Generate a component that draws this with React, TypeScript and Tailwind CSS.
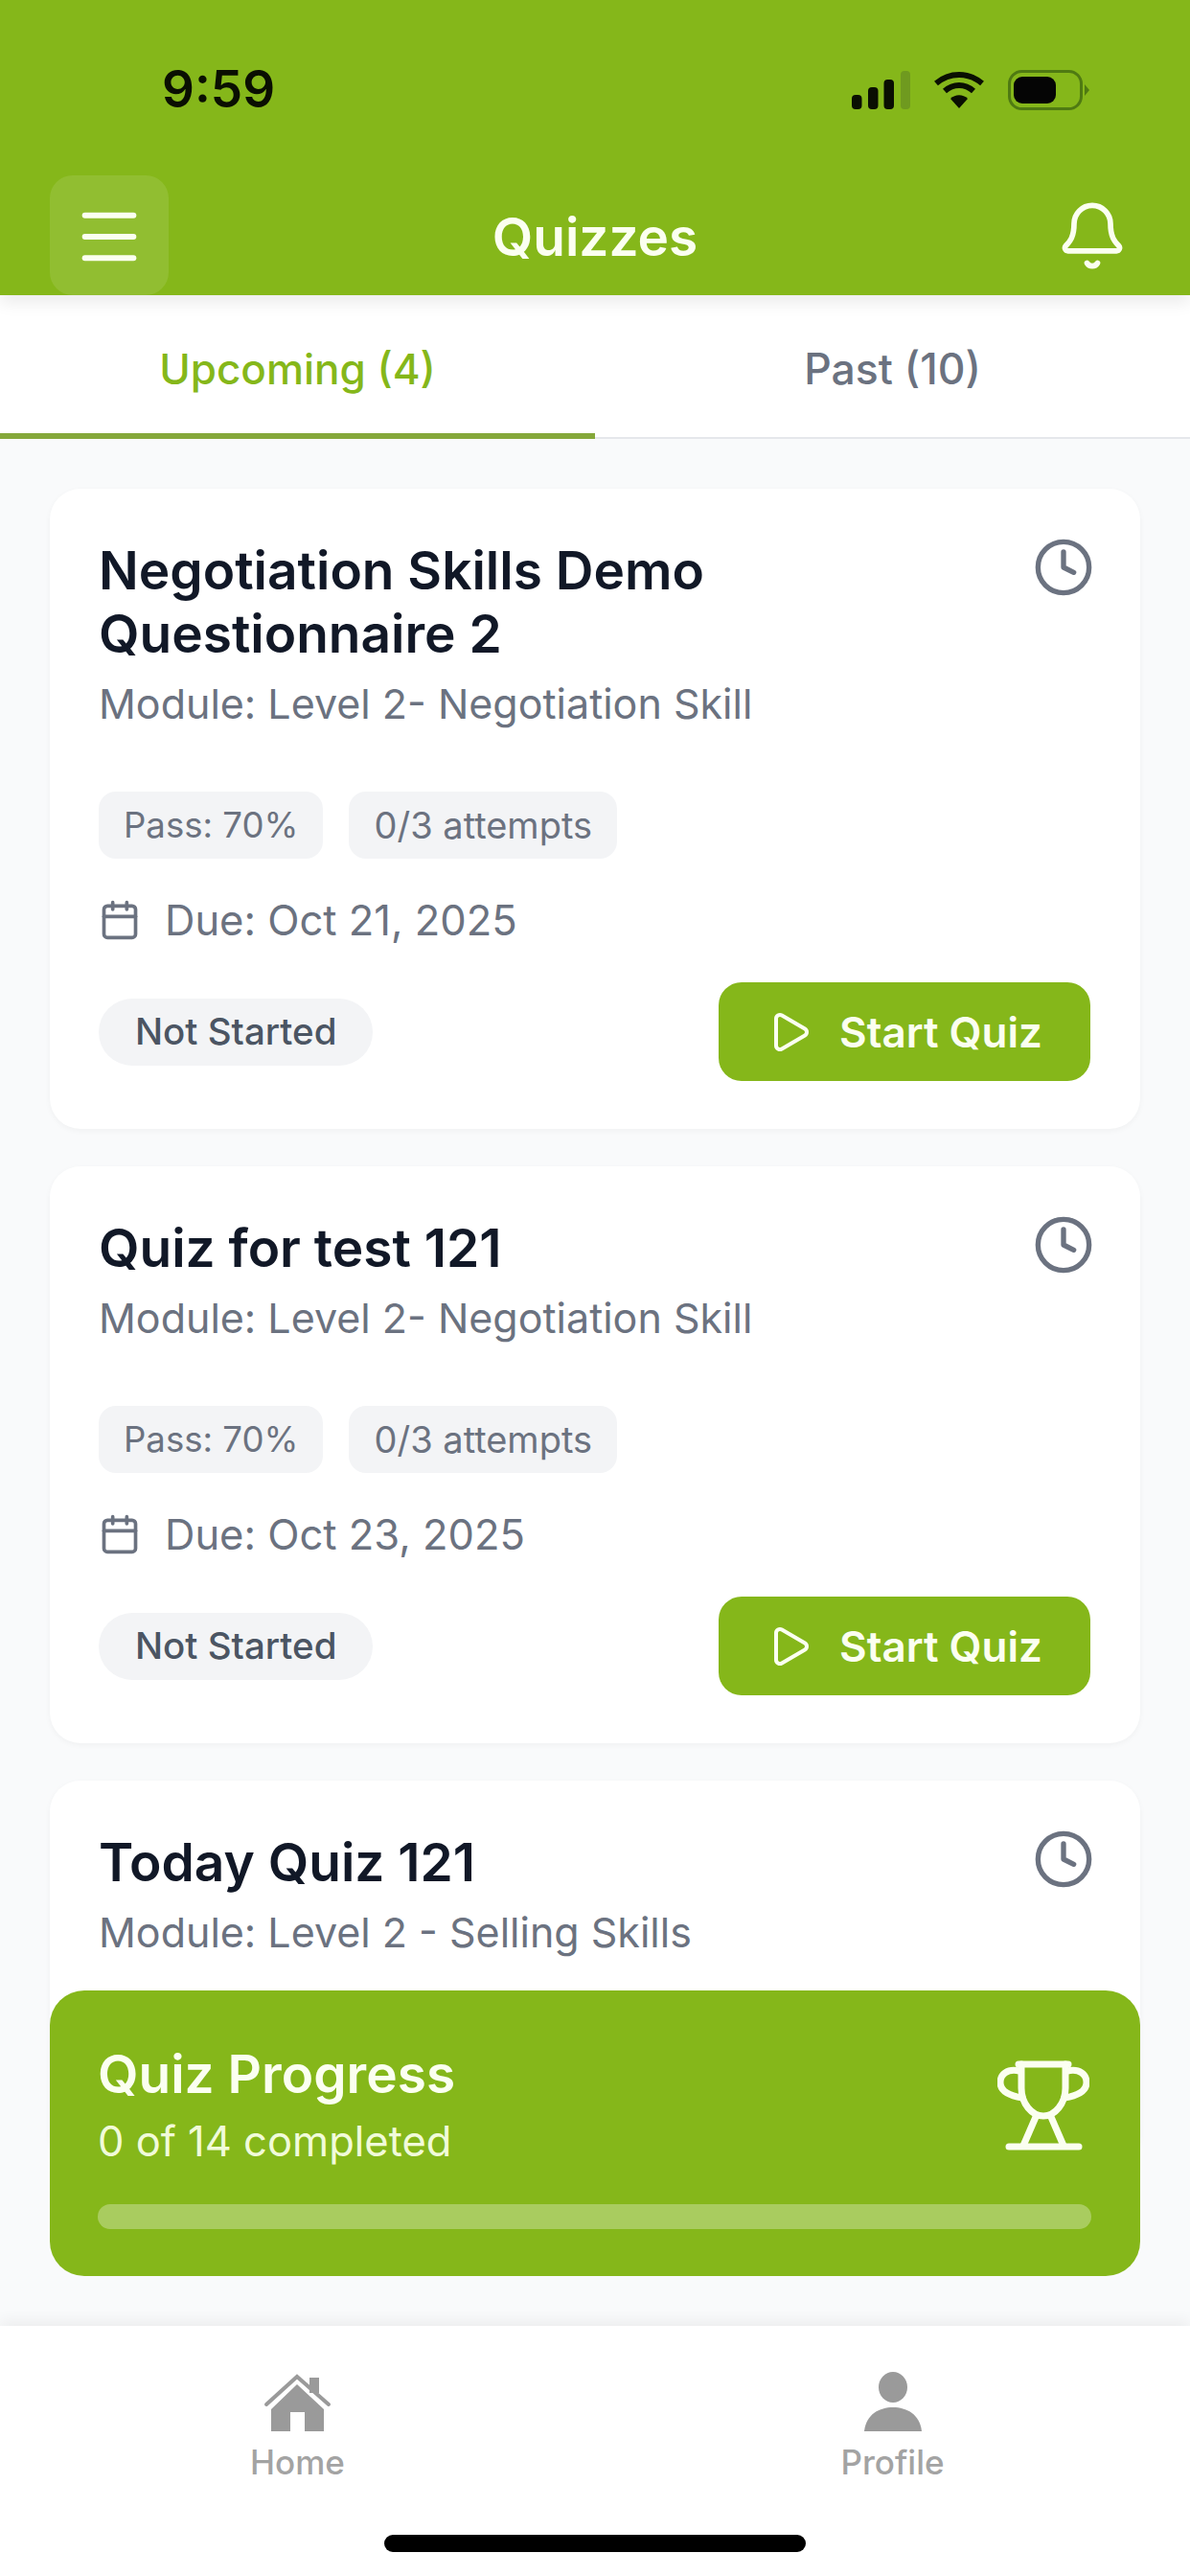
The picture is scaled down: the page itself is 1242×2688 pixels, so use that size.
import { Bell, Calendar, Clock, Menu, Play } from "lucide-react";

type Quiz = {
  title: string[];
  module: string;
  due?: string;
};

const quizzes: Quiz[] = [
  { title: ["Negotiation Skills Demo", "Questionnaire 2"], module: "Module: Level 2- Negotiation Skill", due: "Due: Oct 21, 2025" },
  { title: ["Quiz for test 121"], module: "Module: Level 2- Negotiation Skill", due: "Due: Oct 23, 2025" },
  { title: ["Today Quiz 121"], module: "Module: Level 2 - Selling Skills" },
];

const StatusIcons = () => (
  <div className="flex items-center gap-[25px] mt-[6px]">
    <svg width="61" height="40" viewBox="0 0 61 40">
      <rect x="0" y="25" width="10.5" height="15" rx="4" fill="#0a0f02" />
      <rect x="17" y="17" width="10.5" height="23" rx="4" fill="#0a0f02" />
      <rect x="33.5" y="9" width="10.5" height="31" rx="4" fill="#0a0f02" />
      <rect x="51" y="0" width="10" height="40" rx="4" fill="#6f9a1f" />
    </svg>
    <svg width="52" height="40" viewBox="0 0 52 40">
      <path d="M2 13 C16 1 36 1 50 13" fill="none" stroke="#0a0f02" strokeWidth="6" />
      <path d="M11 21 C20 13 32 13 41 21" fill="none" stroke="#0a0f02" strokeWidth="6" />
      <path d="M17 29 C22 24 30 24 35 29 L26 39 Z" fill="#0a0f02" />
    </svg>
    <svg width="86" height="42" viewBox="0 0 86 42">
      <rect x="1.5" y="1.5" width="75" height="39" rx="13" fill="none" stroke="#4f7a12" strokeWidth="3" />
      <rect x="6" y="7" width="44" height="28" rx="9" fill="#050505" />
      <path d="M80 15 L85 21 L80 27 Z" fill="#4f7a12" />
    </svg>
  </div>
);

const Header = () => (
  <div className="bg-[#85b71a] h-[308px] flex flex-col shrink-0 relative z-10 shadow-[0_8px_16px_rgba(0,0,0,0.08)]">
    <div className="h-[183px] pl-[169px] pr-[104px] pt-[67px] flex justify-between items-start">
      <span className="text-[53px] leading-[52px] font-semibold text-[#0a0f02]">9:59</span>
      <StatusIcons />
    </div>
    <div className="flex-1 flex items-center px-[52px]">
      <div className="flex-1">
        <div className="w-[124px] h-[125px] rounded-[24px] bg-white/10 flex items-center justify-center">
          <Menu size={76} color="#fbfff0" strokeWidth={1.9} className="mt-[2px]" />
        </div>
      </div>
      <span className="text-[55px] font-semibold text-[#fbfff0] mb-[-4px]">Quizzes</span>
      <div className="flex-1 flex justify-end">
        <Bell size={76} color="#fbfff0" strokeWidth={1.8} className="mr-[12px]" />
      </div>
    </div>
  </div>
);

const Tabs = () => (
  <div className="h-[150px] bg-white flex shrink-0 border-b-2 border-[#e5e7eb]">
    <div className="flex-1 flex items-center justify-center text-[44px] font-medium text-[#85b71a] border-b-[6px] border-[#85a83a] mb-[-2px] pt-[10px]">
      Upcoming (4)
    </div>
    <div className="flex-1 flex items-center justify-center text-[44.5px] font-medium text-[#6b7280] pt-[6px]">
      Past (10)
    </div>
  </div>
);

const QuizCard = ({ quiz }: { quiz: Quiz }) => (
  <div className={`bg-white rounded-[32px] pl-[51px] pr-[52px] pt-[52px] pb-[50px] shadow-[0_2px_6px_rgba(0,0,0,0.04)] shrink-0 ${quiz.due ? "" : "min-h-[400px]"}`}>
    <div className="flex justify-between items-start">
      <div className="text-[55px] leading-[66px] font-semibold text-[#111827]">
        {quiz.title.map((line) => (
          <div key={line}>{line}</div>
        ))}
      </div>
      <Clock size={64} color="#6b7280" strokeWidth={2} className="mr-[-4px] mt-[-2px]" />
    </div>
    <div className="text-[43px] leading-[58px] text-[#6b7280] mt-[11px]">{quiz.module}</div>
    {quiz.due && (
      <>
        <div className="flex gap-[27px] mt-[63px]">
          <span className="h-[70px] px-[26px] rounded-[18px] bg-[#f3f4f6] flex items-center text-[36.6px] text-[#6b7280]">Pass: 70%</span>
          <span className="h-[70px] px-[26px] rounded-[18px] bg-[#f3f4f6] flex items-center text-[38px] text-[#6b7280]">0/3 attempts</span>
        </div>
        <div className="flex items-center gap-[25px] mt-[38px] text-[43.5px] leading-[52px] text-[#6b7280]">
          <Calendar size={44} strokeWidth={2} />
          <span>{quiz.due}</span>
        </div>
        <div className="flex justify-between items-center mt-[39px]">
          <span className="h-[70px] px-[38px] rounded-full bg-[#f3f4f6] flex items-center text-[38.5px] font-medium text-[#4b5563]">Not Started</span>
          <button className="h-[103px] w-[388px] rounded-[24px] bg-[#85b71a] flex items-center justify-center gap-[28px] text-[44px] font-semibold text-[#fbfff0]">
            <Play size={48} strokeWidth={2} />
            <span>Start Quiz</span>
          </button>
        </div>
      </>
    )}
  </div>
);

const TrophyIcon = () => (
  <svg width="96" height="96" viewBox="0 0 96 96" fill="none" stroke="#fbfff0" strokeWidth="7" strokeLinecap="round" strokeLinejoin="round" className="mr-[2px] mt-[17px]">
    <path d="M22 5 H74" />
    <path d="M25 5 V30 C25 46 36 59 48 59 C60 59 71 46 71 30 V5" />
    <path d="M40 60 L27 90" />
    <path d="M56 60 L69 90" />
    <path d="M12 91 H85" />
    <path d="M23 12 C10 9 3 16 3 24 C3 33 13 38 26 40" />
    <path d="M73 12 C86 9 93 16 93 24 C93 33 83 38 70 40" />
  </svg>
);

const ProgressPanel = () => (
  <div className="absolute left-[52px] right-[52px] bottom-[52px] h-[298px] rounded-[36px] bg-[#85b71a] pl-[50px] pr-[51px] pt-[55px]">
    <div className="flex justify-between items-start">
      <div>
        <div className="text-[55px] leading-[64px] font-semibold text-[#fbfff0]">Quiz Progress</div>
        <div className="text-[43.5px] leading-[56px] text-[#f1fbd9] mt-[10px]">0 of 14 completed</div>
      </div>
      <TrophyIcon />
    </div>
    <div className="h-[26px] rounded-full bg-white/30 mt-[38px]" />
  </div>
);

const BottomNav = () => (
  <div className="h-[261px] bg-white shrink-0 relative shadow-[0_-6px_14px_rgba(0,0,0,0.05)]">
    <div className="flex pt-[48px]">
      <div className="flex-1 flex flex-col items-center">
        <svg width="72" height="62" viewBox="0 0 72 62">
          <path d="M3 34 L35 5 L68 34" fill="none" stroke="#9a9a9a" strokeWidth="4" strokeLinecap="round" />
          <rect x="48" y="6" width="10" height="16" fill="#9a9a9a" />
          <path d="M8 39 L35 13 L63 39 L63 62 L43 62 L43 42 L28 42 L28 62 L8 62 Z" fill="#9a9a9a" />
        </svg>
        <span className="text-[35px] leading-[44px] font-medium text-[#a3a3a3] mt-[10px]">Home</span>
      </div>
      <div className="flex-1 flex flex-col items-center">
        <svg width="62" height="62" viewBox="0 0 62 62">
          <ellipse cx="31" cy="16" rx="15" ry="16" fill="#9a9a9a" />
          <path d="M1 62 C3 44 17 37 31 37 C45 37 59 44 61 62 Z" fill="#9a9a9a" />
        </svg>
        <span className="text-[35px] leading-[44px] font-medium text-[#a3a3a3] mt-[10px]">Profile</span>
      </div>
    </div>
    <div className="absolute left-[401px] bottom-[25px] w-[440px] h-[18px] rounded-full bg-black" />
  </div>
);

export default function App() {
  return (
    <div className="w-[1242px] h-[2688px] flex flex-col overflow-hidden bg-[#f9fafb] font-['Inter',sans-serif]">
      <Header />
      <Tabs />
      <div className="flex-1 min-h-0 relative overflow-hidden">
        <div className="flex flex-col gap-[39px] px-[52px] pt-[52px]">
          {quizzes.map((q) => (
            <QuizCard key={q.title[0]} quiz={q} />
          ))}
        </div>
        <ProgressPanel />
      </div>
      <BottomNav />
    </div>
  );
}
